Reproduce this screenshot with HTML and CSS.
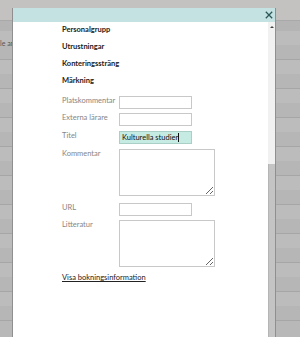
FILE: index.html
```html
<!DOCTYPE html>
<html lang="sv">
<head>
    <meta charset="UTF-8">
    <meta name="viewport" content="width=device-width, initial-scale=1.0">
    <title>Bokning</title>
    <link rel="stylesheet" href="styles.css">
</head>
<body>
    <div class="page">
        <div class="topbar"></div>
        <div class="subbar"></div>
        <div class="row"><span class="cell">le an</span></div>
        <div class="row"></div>
        <div class="row"></div>
        <div class="row"></div>
        <div class="row"></div>
        <div class="row"></div>
        <div class="row"></div>
        <div class="row"></div>
        <div class="row"></div>
        <div class="row"></div>
    </div>

    <div class="modal">
        <div class="modal-header">
            <button class="close" title="Stäng">
                <svg width="8" height="8" viewBox="0 0 8 8">
                    <path d="M0.8 0.8 L7.2 7.2 M7.2 0.8 L0.8 7.2" stroke="#2c5757" stroke-width="1.3" fill="none"/>
                </svg>
            </button>
        </div>
        <div class="modal-body">
            <div class="content">
                <div class="section">Personalgrupp</div>
                <div class="section">Utrustningar</div>
                <div class="section">Konteringssträng</div>
                <div class="section">Märkning</div>

                <div class="form">
                    <div class="form-row">
                        <label for="plats">Platskommentar</label>
                        <input type="text" id="plats">
                    </div>
                    <div class="form-row gap5">
                        <label for="externa">Externa lärare</label>
                        <input type="text" id="externa">
                    </div>
                    <div class="form-row gap5">
                        <label>Titel</label>
                        <div class="field active">Kulturella studier<span class="caret"></span></div>
                    </div>
                    <div class="form-row gap7">
                        <label for="kommentar">Kommentar</label>
                        <textarea id="kommentar"></textarea>
                    </div>
                    <div class="form-row">
                        <label for="url">URL</label>
                        <input type="text" id="url">
                    </div>
                    <div class="form-row gap5">
                        <label for="litteratur">Litteratur</label>
                        <textarea id="litteratur"></textarea>
                    </div>
                </div>

                <a href="#" class="info-link">Visa bokningsinformation</a>
            </div>
            <div class="scrollbar">
                <div class="arrow"></div>
                <div class="thumb"></div>
            </div>
        </div>
    </div>
</body>
</html>
```

FILE: styles.css
```css
body {
    margin: 0;
    width: 300px;
    height: 337px;
    overflow: hidden;
    background: #b8b8b8;
    font-family: Lato, "Liberation Sans", sans-serif;
}
.page {
    width: 300px;
}
.topbar {
    height: 20px;
    background: #c4c1c1;
    border-bottom: 1px solid #a9a9a9;
}
.subbar {
    height: 10px;
    background: #b4b4b4;
}
.row {
    height: 28px;
    border-bottom: 1px solid #a6a6a6;
    background: linear-gradient(#bcbcbc 0, #bcbcbc 14px, #b6b6b6 14px, #b6b6b6 100%);
}
.cell {
    display: block;
    padding-top: 8px;
    font-size: 7px;
    color: #555;
}
.modal {
    position: absolute;
    left: 12px;
    top: 8px;
    width: 262px;
    height: 340px;
    background: #fff;
    border-left: 1px solid #8f8f8f;
    border-right: 1px solid #8f8f8f;
    display: flex;
    flex-direction: column;
}
.modal-header {
    height: 14px;
    background: #c5e2e2;
    display: flex;
    justify-content: flex-end;
    align-items: center;
}
.close {
    border: none;
    background: none;
    padding: 0;
    margin-right: 2px;
    width: 9px;
    height: 9px;
    display: flex;
    align-items: center;
    justify-content: center;
}
.modal-body {
    flex: 1;
    display: flex;
}
.content {
    flex: 1;
    padding-left: 49px;
    padding-top: 2px;
    font-size: 7.5px;
}
.section {
    font-size: 7.5px;
    font-weight: bold;
    color: #222;
    line-height: 12px;
    margin-bottom: 5px;
}
.form {
    margin-top: 9px;
}
.form-row {
    display: flex;
    align-items: flex-start;
    margin-bottom: 4px;
}
.form-row.gap5 {
    margin-bottom: 5px;
}
.form-row.gap7 {
    margin-bottom: 7px;
}
label {
    width: 57px;
    font-size: 7.5px;
    line-height: 10px;
    color: #868686;
}
input[type="text"], .field {
    width: 73px;
    height: 13px;
    margin: 0;
    padding: 0 2px;
    border: 1px solid #c8c8c8;
    box-sizing: border-box;
    font-family: Lato, "Liberation Sans", sans-serif;
    font-size: 7.5px;
}
.field.active {
    background: #c6ebe2;
    border-color: #a9cfc6;
    color: #111;
    line-height: 11px;
}
.caret {
    display: inline-block;
    width: 1px;
    height: 9px;
    background: #111;
    vertical-align: -2px;
}
textarea {
    width: 96px;
    height: 47px;
    margin: 0;
    border: 1px solid #c8c8c8;
    box-sizing: border-box;
    display: block;
}
.info-link {
    display: block;
    width: fit-content;
    font-size: 7.5px;
    line-height: 11px;
    color: #222;
}
.scrollbar {
    width: 7px;
    background: #f1f1f1;
    display: flex;
    flex-direction: column;
    align-items: center;
}
.arrow {
    margin-top: 4px;
    width: 0;
    height: 0;
    border-left: 2px solid transparent;
    border-right: 2px solid transparent;
    border-bottom: 2px solid #444;
}
.thumb {
    margin-top: 136px;
    width: 7px;
    flex: 1;
    background: #c4c4c4;
    border-left: 1px solid #b5b5b5;
    box-sizing: border-box;
}
```
